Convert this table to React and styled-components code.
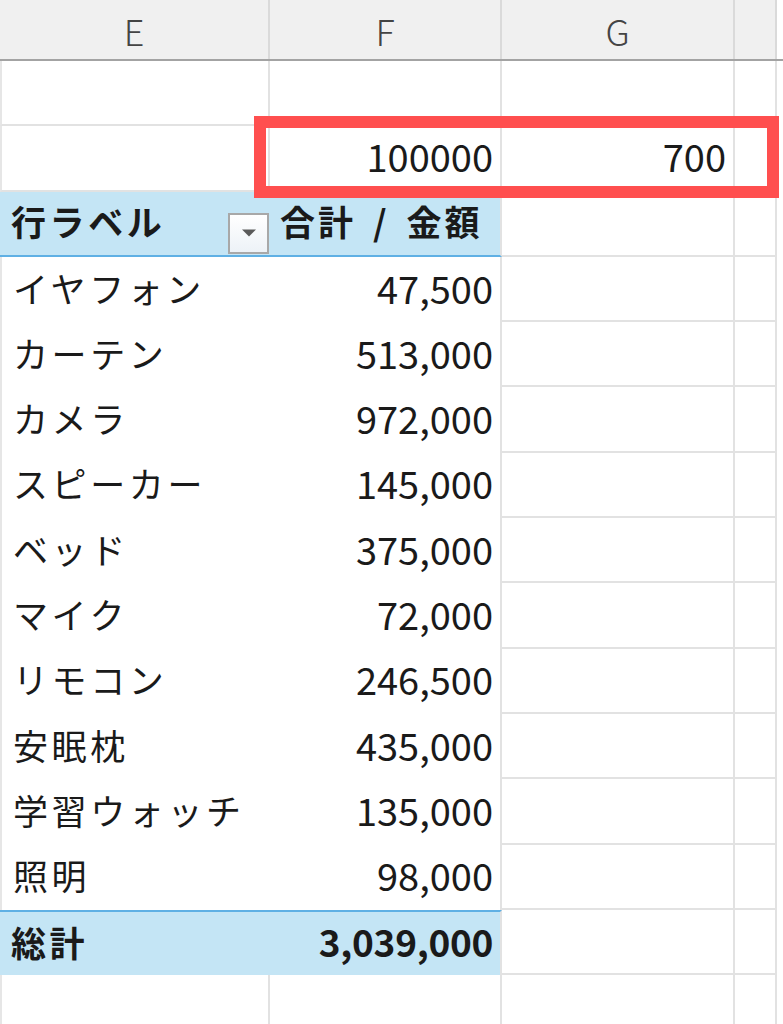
import React from 'react';
import styled, { createGlobalStyle, css } from 'styled-components';

const GlobalStyle = createGlobalStyle`
  html, body {
    margin: 0;
    padding: 0;
    background: #ffffff;
    overflow: hidden;
  }
  body {
    font-family: "Noto Sans CJK JP", "Noto Sans", sans-serif;
    color: #1a1a1a;
  }
`;

const COLS = '270px 232px 233px 42px 6px';
const GRID = '#e2e2e2';
const PIVOT_BG = '#c4e5f5';
const PIVOT_LINE = '#5fb0e4';

const Sheet = styled.div`
  position: relative;
  width: 783px;
  height: 1024px;
  overflow: hidden;
`;

const ColumnBar = styled.div`
  display: grid;
  grid-template-columns: ${COLS};
  height: 61px;
  box-sizing: border-box;
  background: #f0f0f0;
  border-bottom: 2px solid #a3a3a3;
`;

const ColumnLetter = styled.div`
  display: flex;
  align-items: center;
  justify-content: center;
  font-family: "Noto Sans CJK JP", "Noto Sans", sans-serif;
  font-weight: 300;
  font-size: 36px;
  color: #444;
  border-right: ${(p) => (p.$last ? 'none' : '2px solid #dadada')};
  background: ${(p) => (p.$last ? '#ffffff' : 'transparent')};
`;

const Row = styled.div`
  display: grid;
  grid-template-columns: ${COLS};
  grid-template-rows: 100%;
  height: 65.3px;
`;

const toneStyles = {
  plain: css`
    border-right: 2px solid ${GRID};
    border-bottom: 2px solid ${GRID};
  `,
  item: css`
    border-bottom: none;
  `,
  head: css`
    background: ${PIVOT_BG};
    border-bottom: 2px solid ${PIVOT_LINE};
    font-weight: 700;
  `,
  total: css`
    background: ${PIVOT_BG};
    border-top: 2px solid ${PIVOT_LINE};
    font-weight: 700;
  `,
};

const Cell = styled.div`
  box-sizing: border-box;
  min-height: 0;
  overflow: hidden;
  display: flex;
  align-items: center;
  justify-content: ${(p) => (p.$right ? 'flex-end' : 'flex-start')};
  padding: ${(p) => (p.$right ? '0 7px 5px 0' : '0 0 5px 11px')};
  font-size: ${(p) => (p.$right ? '38px' : '35px')};
  letter-spacing: ${(p) => (p.$right ? '0' : '3.6px')};
  white-space: nowrap;
  ${(p) => toneStyles[p.$tone || 'plain']}
  ${(p) => p.$tone === 'total' && p.$right && css`font-size: 37px; letter-spacing: -0.3px;`}
  ${(p) => p.$divider && css`border-right: 2px solid ${GRID};`}
  ${(p) => p.$edge && css`border-left: 2px solid #e6e6e6;`}
`;

const Blank = styled.div`
  box-sizing: border-box;
  border-right: ${(p) => (p.$open ? 'none' : `2px solid ${GRID}`)};
  border-bottom: ${(p) => (p.$open ? 'none' : `2px solid ${GRID}`)};
`;

const HeadLabel = styled.div`
  flex: 1;
  display: flex;
  align-items: center;
  justify-content: space-between;
  height: 100%;
`;

const LabelText = styled.span`
  padding-bottom: 5px;
`;

const SumCaption = styled.span`
  padding-left: 10px;
  letter-spacing: 3px;
  word-spacing: 6px;
`;

const FilterButton = styled.div`
  width: 41px;
  height: 41px;
  box-sizing: border-box;
  align-self: flex-end;
  margin: 0 1px 1px 0;
  border: 2px solid #a8a8a8;
  background: linear-gradient(#ffffff, #edf2f7);
  display: flex;
  align-items: center;
  justify-content: center;
`;

const Highlight = styled.div`
  position: absolute;
  left: 254px;
  top: 116px;
  width: 525px;
  height: 82px;
  box-sizing: border-box;
  border: 12px solid #ff4f4f;
  pointer-events: none;
`;

const items = [
  ['イヤフォン', '47,500'],
  ['カーテン', '513,000'],
  ['カメラ', '972,000'],
  ['スピーカー', '145,000'],
  ['ベッド', '375,000'],
  ['マイク', '72,000'],
  ['リモコン', '246,500'],
  ['安眠枕', '435,000'],
  ['学習ウォッチ', '135,000'],
  ['照明', '98,000'],
];

const Tail = () => (
  <>
    <Blank />
    <Blank />
    <Blank $open />
  </>
);

export default function App() {
  return (
    <>
      <GlobalStyle />
      <Sheet>
        <ColumnBar>
          <ColumnLetter>E</ColumnLetter>
          <ColumnLetter>F</ColumnLetter>
          <ColumnLetter>G</ColumnLetter>
          <ColumnLetter />
          <ColumnLetter $last />
        </ColumnBar>

        <Row>
          <Cell $edge />
          <Cell />
          <Tail />
        </Row>
        <Row>
          <Cell $edge />
          <Cell $right>100000</Cell>
          <Cell $right>700</Cell>
          <Blank />
          <Blank $open />
        </Row>

        <Row>
          <Cell $tone="head" style={{ paddingRight: 0, paddingBottom: 0 }}>
            <HeadLabel>
              <LabelText>行ラベル</LabelText>
              <FilterButton>
                <svg width="16" height="8" viewBox="0 0 16 8">
                  <path d="M1 0.5 L15 0.5 L8 7.5 Z" fill="#5a5a5a" />
                </svg>
              </FilterButton>
            </HeadLabel>
          </Cell>
          <Cell $tone="head" $divider style={{ paddingLeft: 0, letterSpacing: 0 }}>
            <SumCaption>合計 / 金額</SumCaption>
          </Cell>
          <Tail />
        </Row>

        {items.map(([label, amount]) => (
          <Row key={label}>
            <Cell $tone="item" $edge>{label}</Cell>
            <Cell $tone="item" $divider $right>{amount}</Cell>
            <Tail />
          </Row>
        ))}

        <Row>
          <Cell $tone="total">総計</Cell>
          <Cell $tone="total" $divider $right>3,039,000</Cell>
          <Tail />
        </Row>

        <Row>
          <Cell $edge />
          <Cell />
          <Tail />
        </Row>

        <Highlight />
      </Sheet>
    </>
  );
}
